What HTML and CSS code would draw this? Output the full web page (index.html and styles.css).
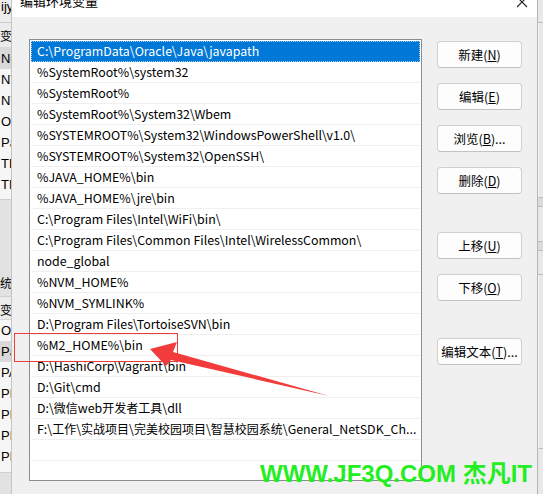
FILE: index.html
```html
<!DOCTYPE html>
<html lang="zh-CN">
<head>
<meta charset="utf-8">
<title>编辑环境变量</title>
<link rel="stylesheet" href="styles.css">
</head>
<body>
<div class="screen">
  <div class="bg-left">
    <div class="lt-top">ijy</div>
    <div class="lt-head"><span class="zh">变</span></div>
    <div class="lt-list">
      <div class="lt-row lt-sel">Ne</div>
      <div class="lt-row">NV</div>
      <div class="lt-row">NV</div>
      <div class="lt-row">On</div>
      <div class="lt-row">Pa</div>
      <div class="lt-row">TE</div>
      <div class="lt-row">TM</div>
    </div>
    <div class="lt-gap"></div>
    <div class="lt-label"><span class="zh">系统</span></div>
    <div class="lt-head2"><span class="zh">变</span></div>
    <div class="lt-list2">
      <div class="lt-row">OS</div>
      <div class="lt-row lt-sel">Pa</div>
      <div class="lt-row">PA</div>
      <div class="lt-row">PR</div>
      <div class="lt-row">PR</div>
      <div class="lt-row">PR</div>
      <div class="lt-row">PR</div>
    </div>
  </div>

  <div class="dialog">
    <div class="titlebar">
      <span class="title">编辑环境变量</span>
      <svg class="close" width="12" height="12" viewBox="0 0 12 12"><path d="M1 1 L11 11 M11 1 L1 11" stroke="#222" stroke-width="1.1" fill="none"/></svg>
    </div>
    <div class="content">
      <div class="list">
        <div class="row sel">C:\ProgramData\Oracle\Java\javapath</div>
        <div class="row">%SystemRoot%\system32</div>
        <div class="row">%SystemRoot%</div>
        <div class="row">%SystemRoot%\System32\Wbem</div>
        <div class="row">%SYSTEMROOT%\System32\WindowsPowerShell\v1.0\</div>
        <div class="row">%SYSTEMROOT%\System32\OpenSSH\</div>
        <div class="row">%JAVA_HOME%\bin</div>
        <div class="row">%JAVA_HOME%\jre\bin</div>
        <div class="row">C:\Program Files\Intel\WiFi\bin\</div>
        <div class="row">C:\Program Files\Common Files\Intel\WirelessCommon\</div>
        <div class="row">node_global</div>
        <div class="row">%NVM_HOME%</div>
        <div class="row">%NVM_SYMLINK%</div>
        <div class="row">D:\Program Files\TortoiseSVN\bin</div>
        <div class="row">%M2_HOME%\bin</div>
        <div class="row">D:\HashiCorp\Vagrant\bin</div>
        <div class="row">D:\Git\cmd</div>
        <div class="row">D:\<span class="zh">微信</span>web<span class="zh">开发者工具</span>\dll</div>
        <div class="row">F:\<span class="zh">工作</span>\<span class="zh">实战项目</span>\<span class="zh">完美校园项目</span>\<span class="zh">智慧校园系统</span>\General_NetSDK_Ch...</div>
        <div class="row"></div>
      </div>
      <div class="buttons">
        <button class="btn">新建(<u>N</u>)</button>
        <button class="btn">编辑(<u>E</u>)</button>
        <button class="btn">浏览(<u>B</u>)...</button>
        <button class="btn">删除(<u>D</u>)</button>
        <button class="btn btn-sep1">上移(<u>U</u>)</button>
        <button class="btn">下移(<u>O</u>)</button>
        <button class="btn btn-sep2">编辑文本(<u>T</u>)...</button>
      </div>
    </div>
  </div>

  <div class="bg-right">
    <div class="rt-a"></div>
    <div class="rt-b"></div>
    <div class="rt-c"></div>
    <div class="rt-d"></div>
    <div class="rt-e"></div>
    <div class="rt-f"></div>
    <div class="rt-g"></div>
  </div>

  <div class="redbox"></div>
  <svg class="arrow" width="543" height="494" viewBox="0 0 543 494">
    <polygon points="150,349 177,342 173,352 329,396 171,360 166,366" fill="#f23b3b"/>
  </svg>
  <div class="watermark">WWW.JF3Q.COM 杰凡IT</div>
</div>
</body>
</html>
```
FILE: styles.css
```css
* { box-sizing: border-box; }
html, body { margin: 0; padding: 0; }
body {
  width: 543px;
  height: 494px;
  overflow: hidden;
  background: #e6e6e6;
  font-family: "Noto Sans CJK SC", sans-serif;
  font-size: 13px;
  color: #000;
}
.zh { font-family: "Noto Sans CJK SC", sans-serif; font-size: 12px; }

.screen {
  position: relative;
  display: flex;
  width: 543px;
  height: 494px;
}

/* background window on the left */
.bg-left {
  width: 12px;
  flex: none;
  display: flex;
  flex-direction: column;
  overflow: hidden;
  white-space: nowrap;
  background: #e2e2e2;
  border-right: 1px solid #c4c4c4;
  font-family: "Liberation Sans", "Noto Sans CJK SC", sans-serif;
}
.lt-top {
  height: 23px;
  line-height: 14px;
  padding-left: 1px;
  background: #ececec;
  border-bottom: 1px solid #cdcdcd;
}
.lt-head {
  height: 25px;
  line-height: 26px;
  background: #ececec;
  border-bottom: 1px solid #d8d8d8;
}
.lt-list, .lt-list2 {
  background: #f6f6f6;
  border-bottom: 1px solid #cfcfcf;
}
.lt-list { height: 152px; }
.lt-list2 { height: 153px; }
.lt-row { height: 21px; line-height: 21px; padding-left: 1px; }
.lt-sel { background: #d9d9d9; }
.lt-gap { height: 72px; }
.lt-label { height: 25px; line-height: 22px; margin-left: -12px; border-bottom: 1px solid #d0d0d0; }
.lt-head2 { height: 23px; line-height: 26px; background: #ececec; border-bottom: 1px solid #d8d8d8; }

/* dialog */
.dialog {
  width: 525px;
  flex: none;
  display: flex;
  flex-direction: column;
  background: #f0f0f0;
}
.titlebar {
  height: 17px;
  flex: none;
  background: #fff;
  display: flex;
  justify-content: space-between;
  align-items: flex-start;
  padding: 0 9px 0 8px;
  overflow: hidden;
}
.title {
  font-size: 13px;
  line-height: 15px;
  margin-top: -7px;
}
.close { margin-top: -4px; }

.content {
  flex: 1;
  display: flex;
  align-items: flex-start;
  gap: 15px;
  padding: 22px 0 0 17px;
}
.list {
  width: 393px;
  height: 442px;
  flex: none;
  background: #fff;
  border: 1px solid #8a8d92;
  padding: 1px;
  display: flex;
  flex-direction: column;
}
.row {
  height: 21px;
  flex: none;
  font-size: 12.4px;
  line-height: 20px;
  padding-left: 6px;
  white-space: nowrap;
  overflow: hidden;
  border-bottom: 1px solid #efefef;
}
.row .zh { line-height: 1; }
.row.sel {
  background: #0078d7;
  color: #fff;
  border-bottom-color: #0078d7;
  outline: 1px dotted #a9cdf0;
  outline-offset: -1px;
}

.buttons {
  width: 85px;
  flex: none;
  display: flex;
  flex-direction: column;
  gap: 15px;
  padding-top: 2px;
}
.btn {
  height: 27px;
  padding: 0;
  background: #fdfdfd;
  border: 1px solid #d0d0d0;
  border-bottom-color: #c2c2c2;
  border-radius: 4px;
  font-family: "Noto Sans CJK SC", sans-serif;
  font-size: 12.5px;
  color: #000;
}
.btn-sep1 { margin-top: 23px; }
.btn-sep2 { margin-top: 22px; }

/* background window on the right */
.bg-right {
  width: 6px;
  flex: none;
  display: flex;
  flex-direction: column;
  background: #e8e8e8;
  border-left: 1px solid #b5b5b5;
}
.rt-a { height: 23px; border-bottom: 1px solid #bdbdbd; }
.rt-b { height: 175px; border-bottom: 1px solid #bdbdbd; border-left: 1px solid #f6f6f6; }
.rt-c { height: 9px; background: #dadada; border-bottom: 1px solid #bdbdbd; }
.rt-d { height: 35px; border-bottom: 1px solid #bdbdbd; }
.rt-e { height: 9px; background: #dadada; border-bottom: 1px solid #bdbdbd; }
.rt-f { height: 24px; border-bottom: 1px solid #bdbdbd; }
.rt-g { height: 174px; border-bottom: 1px solid #bdbdbd; border-left: 1px solid #f6f6f6; }

/* annotations */
.redbox {
  position: absolute;
  left: 14px;
  top: 333px;
  width: 164px;
  height: 29px;
  border: 1px solid #e8403c;
}
.arrow {
  position: absolute;
  left: 0;
  top: 0;
  pointer-events: none;
}
.watermark {
  position: absolute;
  left: 260px;
  top: 460px;
  font-family: "Liberation Sans", "Noto Sans CJK SC", sans-serif;
  font-weight: bold;
  font-size: 24px;
  line-height: 28px;
  color: #22ee22;
  white-space: nowrap;
}
```
